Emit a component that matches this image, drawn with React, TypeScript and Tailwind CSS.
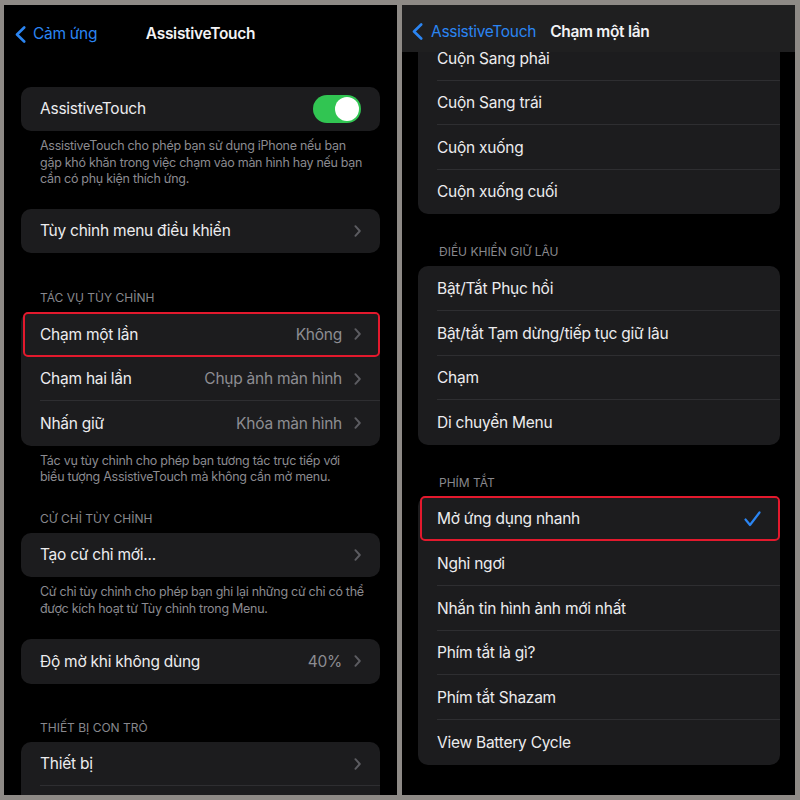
import React from "react";

const Chevron = () => (
  <svg width="7" height="12" viewBox="0 0 7 12" fill="none" className="shrink-0">
    <path d="M1.4 1.2L5.8 6L1.4 10.8" stroke="#5c5c61" strokeWidth="1.9" strokeLinecap="round" strokeLinejoin="round" />
  </svg>
);

const BackChevron = () => (
  <svg width="11" height="17" viewBox="0 0 11 17" fill="none" className="shrink-0">
    <path d="M9.2 1.5L2 8.5L9.2 15.5" stroke="#2b85f2" strokeWidth="2.6" strokeLinecap="round" strokeLinejoin="round" />
  </svg>
);

const Check = () => (
  <svg width="17" height="16" viewBox="0 0 17 16" fill="none" className="shrink-0">
    <path d="M1.5 8.5L6 14L15.5 1.5" stroke="#2b85f2" strokeWidth="2.2" strokeLinecap="round" strokeLinejoin="round" />
  </svg>
);

const Sep = () => <div className="relative h-px mt-[-1px] bg-[#2e2e31] ml-[19px]" />;

type RowProps = {
  label: string;
  value?: string;
  chevron?: boolean;
  check?: boolean;
  highlight?: boolean;
  tall?: boolean;
};

const Row = ({ label, value, chevron, check, highlight, tall }: RowProps) => (
  <div className={"relative flex items-center pl-[19px] pr-[19px] " + (tall ? "h-[44.8px]" : "h-[44.5px]")}>
    <span className="flex-1 text-[15.5px] tracking-[-0.25px] text-[#ececee] whitespace-nowrap">{label}</span>
    {value && (
      <span className="text-[15.5px] tracking-[-0.25px] text-[#8d8d92] mr-[12px] whitespace-nowrap">{value}</span>
    )}
    {chevron && <Chevron />}
    {check && <Check />}
    {highlight && (
      <div className="absolute left-[2px] right-[0.5px] inset-y-0 border-2 border-[#e3192d] rounded-[5px]" />
    )}
  </div>
);

const Footer = ({ lines }: { lines: string[] }) => (
  <div className="px-[36px] pt-[7px] text-[12.5px] tracking-[-0.28px] leading-[16.5px] text-[#8b8b90]">
    {lines.map((l, i) => (
      <div key={i} className="whitespace-nowrap">{l}</div>
    ))}
  </div>
);

const SectionHeader = ({ text, className }: { text: string; className?: string }) => (
  <div className={"text-[12px] leading-[16px] text-[#88888d] uppercase " + (className ?? "")}>{text}</div>
);

const Card = ({ children, className }: { children: React.ReactNode; className?: string }) => (
  <div className={"mx-[17px] bg-[#1c1c1e] rounded-[10px] " + (className ?? "")}>{children}</div>
);

const LeftPanel = () => (
  <div className="w-[393px] h-[790px] bg-black overflow-hidden flex flex-col shrink-0">
    <div className="h-[58px] shrink-0 grid grid-cols-[1fr_auto_1fr] items-center">
      <div className="flex items-center pl-[11px]">
        <BackChevron />
        <span className="ml-[7px] text-[15.5px] tracking-[-0.3px] text-[#2b85f2]">Cảm ứng</span>
      </div>
      <div className="text-[15.5px] tracking-[-0.3px] font-semibold text-[#f2f2f4]">AssistiveTouch</div>
      <div />
    </div>

    <Card className="mt-[24px]">
      <div className="h-[44px] flex items-center pl-[19px] pr-[19px]">
        <span className="flex-1 text-[15.5px] tracking-[-0.25px] text-[#ececee]">AssistiveTouch</span>
        <div className="w-[48px] h-[28px] rounded-full bg-[#31c552] flex items-center justify-end pr-[2px]">
          <div className="w-[24px] h-[24px] rounded-full bg-white" />
        </div>
      </div>
    </Card>
    <Footer
      lines={[
        "AssistiveTouch cho phép bạn sử dụng iPhone nếu bạn",
        "gặp khó khăn trong việc chạm vào màn hình hay nếu bạn",
        "cần có phụ kiện thích ứng.",
      ]}
    />

    <Card className="mt-[21px]">
      <Row label="Tùy chỉnh menu điều khiển" chevron />
    </Card>

    <SectionHeader text="Tác vụ tùy chỉnh" className="px-[36px] mt-[37px] mb-[6px]" />
    <Card>
      <Row label="Chạm một lần" value="Không" chevron highlight />
      <Row label="Chạm hai lần" value="Chụp ảnh màn hình" chevron />
      <Sep />
      <Row label="Nhấn giữ" value="Khóa màn hình" chevron />
    </Card>
    <Footer
      lines={[
        "Tác vụ tùy chỉnh cho phép bạn tương tác trực tiếp với",
        "biểu tượng AssistiveTouch mà không cần mở menu.",
      ]}
    />

    <SectionHeader text="Cử chỉ tùy chỉnh" className="px-[36px] mt-[25px] mb-[6px]" />
    <Card>
      <Row label="Tạo cử chỉ mới..." chevron />
    </Card>
    <Footer
      lines={[
        "Cử chỉ tùy chỉnh cho phép bạn ghi lại những cử chỉ có thể",
        "được kích hoạt từ Tùy chỉnh trong Menu.",
      ]}
    />

    <Card className="mt-[22px]">
      <Row label="Độ mờ khi không dùng" value="40%" chevron />
    </Card>

    <SectionHeader text="Thiết bị con trỏ" className="px-[36px] mt-[36px] mb-[6px]" />
    <Card className="rounded-b-none">
      <Row label="Thiết bị" chevron />
      <Sep />
      <div className="h-[44.5px]" />
    </Card>
  </div>
);

const RCard = ({ children, className }: { children: React.ReactNode; className?: string }) => (
  <div className={"ml-[16px] mr-[15px] bg-[#1c1c1e] rounded-[10px] " + (className ?? "")}>{children}</div>
);

const RightPanel = () => (
  <div className="w-[393px] h-[790px] bg-black overflow-hidden flex flex-col shrink-0">
    <div className="h-[47px] shrink-0 bg-[#1f1f20] flex items-center pt-[6px] pl-[10px] relative z-10">
      <BackChevron />
      <span className="ml-[8px] text-[15.5px] tracking-[-0.3px] text-[#2b85f2]">AssistiveTouch</span>
      <span className="ml-[14px] text-[15.5px] tracking-[-0.3px] font-semibold text-[#f2f2f4]">Chạm một lần</span>
    </div>
    <div className="flex-1 overflow-hidden flex flex-col">
      <RCard className="mt-[-16px]">
        <Row label="Cuộn Sang phải" />
        <Sep />
        <Row label="Cuộn Sang trái" />
        <Sep />
        <Row label="Cuộn xuống" />
        <Sep />
        <Row label="Cuộn xuống cuối" />
      </RCard>

      <SectionHeader text="Điều khiển giữ lâu" className="px-[37px] mt-[30px] mb-[6px]" />
      <RCard>
        <Row label="Bật/Tắt Phục hồi" tall />
        <Sep />
        <Row label="Bật/tắt Tạm dừng/tiếp tục giữ lâu" tall />
        <Sep />
        <Row label="Chạm" tall />
        <Sep />
        <Row label="Di chuyển Menu" tall />
      </RCard>

      <SectionHeader text="Phím tắt" className="px-[37px] mt-[30px] mb-[5px]" />
      <RCard>
        <Row label="Mở ứng dụng nhanh" check highlight tall />
        <Row label="Nghỉ ngơi" tall />
        <Sep />
        <Row label="Nhắn tin hình ảnh mới nhất" tall />
        <Sep />
        <Row label="Phím tắt là gì?" tall />
        <Sep />
        <Row label="Phím tắt Shazam" tall />
        <Sep />
        <Row label="View Battery Cycle" tall />
      </RCard>
    </div>
  </div>
);

export default function App() {
  return (
    <div className="w-[800px] h-[800px] bg-[#8e8a86] flex pt-[5px] pl-[4px] gap-[5px] font-['Inter','Noto_Sans',sans-serif] antialiased">
      <LeftPanel />
      <RightPanel />
    </div>
  );
}
